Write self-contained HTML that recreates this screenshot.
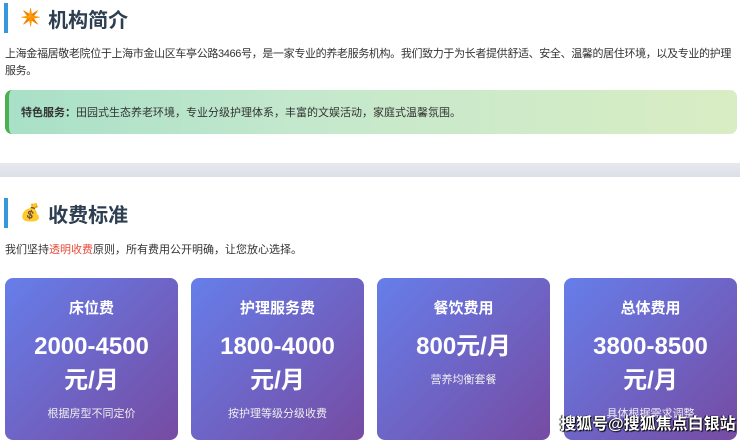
<!DOCTYPE html>
<html><head><meta charset="utf-8"><style>
*{margin:0;padding:0;box-sizing:border-box}
body{width:740px;height:440px;overflow:hidden;background:#fff;font-family:"Liberation Sans","Noto Sans CJK SC",sans-serif;color:#333;position:relative}
.h{position:absolute;left:4px;height:30px;border-left:4px solid #3498db;padding-left:12px;display:flex;align-items:center;font-size:20px;font-weight:bold;color:#2c3e50}
.h span.i{font-size:17px;margin-right:7px}
.p{position:absolute;left:5px;font-size:11px;line-height:17px;color:#333;width:735px;white-space:nowrap}
.g{position:absolute;left:5px;top:90px;width:732px;height:44px;border-radius:7px;border-left:4px solid #4caf50;background:linear-gradient(90deg,#a8e0c8,#c4e8cc 40%,#d9edc4);font-size:11px;padding-left:12px;display:flex;align-items:center;color:#333}
.band{position:absolute;left:0;top:163px;width:740px;height:14px;background:linear-gradient(#e8e9ef,#dcdfe8)}
.c{position:absolute;top:278px;width:173px;height:162px;border-radius:8px;background:linear-gradient(135deg,#667eea,#764ba2);color:#fff;text-align:center}
.c .t{position:absolute;top:19px;width:100%;font-size:15px;font-weight:bold}
.c .n{position:absolute;top:52px;width:100%;font-size:24px;font-weight:bold;line-height:34px}
.c .s{font-size:11px;position:absolute;width:100%;color:#eee}
.wm{position:absolute;left:560px;top:410px;font-size:16px;color:#fff;text-shadow:1px 1px 1px #000,-1px 0 1px #000;font-weight:bold}
</style></head><body>
<div class="h" style="top:3px"><span class="i">✴️</span>机构简介</div>
<div class="p" style="top:46px;letter-spacing:-0.35px">上海金福居敬老院位于上海市金山区车亭公路3466号，是一家专业的养老服务机构。我们致力于为长者提供舒适、安全、温馨的居住环境，以及专业的护理<br>服务。</div>
<div class="g"><b>特色服务：</b>田园式生态养老环境，专业分级护理体系，丰富的文娱活动，家庭式温馨氛围。</div>
<div class="band"></div>
<div class="h" style="top:198px"><span class="i">💰</span>收费标准</div>
<div class="p" style="top:242px">我们坚持<span style="color:#e74c3c">透明收费</span>原则，所有费用公开明确，让您放心选择。</div>
<div class="c" style="left:5px"><div class="t">床位费</div><div class="n">2000-4500<br>元/月</div><div class="s" style="top:127px">根据房型不同定价</div></div>
<div class="c" style="left:191px"><div class="t">护理服务费</div><div class="n">1800-4000<br>元/月</div><div class="s" style="top:127px">按护理等级分级收费</div></div>
<div class="c" style="left:377px"><div class="t">餐饮费用</div><div class="n">800元/月</div><div class="s" style="top:93px">营养均衡套餐</div></div>
<div class="c" style="left:564px"><div class="t">总体费用</div><div class="n">3800-8500<br>元/月</div><div class="s" style="top:127px">具体根据需求调整</div></div>
<div class="wm">搜狐号@搜狐焦点白银站</div>
</body></html>
